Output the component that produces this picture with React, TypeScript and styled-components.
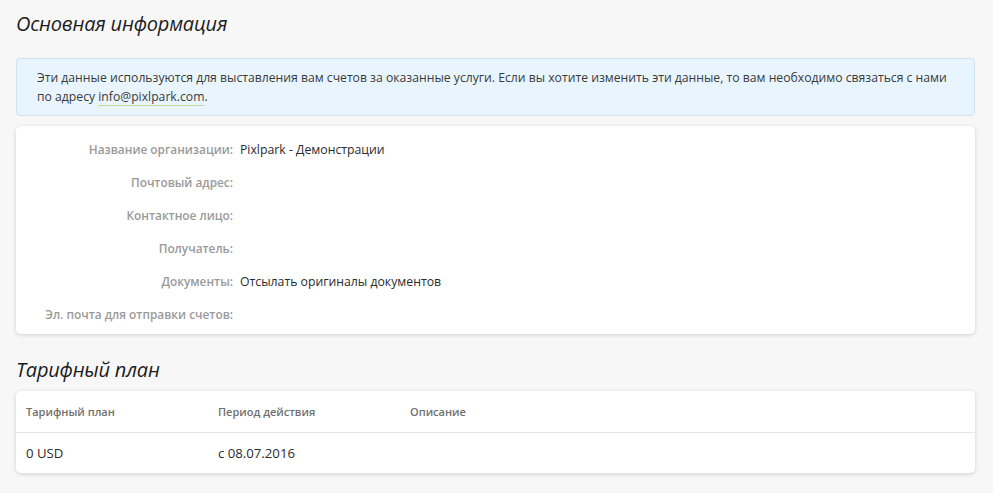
import { FC, Fragment } from 'react'
import styled, { createGlobalStyle } from 'styled-components'

const GlobalStyle = createGlobalStyle`
  html, body {
    margin: 0;
    padding: 0;
    background: #f7f7f7;
    font-family: 'Open Sans', 'Noto Sans', 'DejaVu Sans', sans-serif;
    color: #333;
  }
`

const Page = styled.div`
  padding: 8px 18px 20px 16px;
`

const Title = styled.h2<{ top?: number }>`
  margin: 0;
  padding-top: ${({ top }) => top ?? 0}px;
  font-size: 20px;
  font-weight: 400;
  font-style: italic;
  line-height: 32px;
  color: #1c1c1c;
  letter-spacing: -0.2px;
`

const Notice = styled.div`
  margin-top: 18px;
  padding: 9px 20px 9px 20px;
  background: #e9f5fe;
  border: 1px solid #cfe2f0;
  border-radius: 4px;
  font-size: 12.2px;
  line-height: 19px;
  color: #3a3a3a;
`

const Link = styled.a`
  color: #3a3a3a;
  text-decoration: none;
  border-bottom: 1px solid #bfdc94;
`

const Card = styled.div<{ top?: number }>`
  margin-top: ${({ top }) => top ?? 10}px;
  background: #fff;
  border-radius: 5px;
  box-shadow: 0 1px 4px rgba(0, 0, 0, 0.16);
`

const Fields = styled.div`
  display: grid;
  grid-template-columns: 217px 1fr;
  column-gap: 7px;
  padding: 7px 0 3px;
`

const Label = styled.div`
  text-align: right;
  font-size: 11.85px;
  font-weight: 600;
  color: #9a9a9a;
  line-height: 33px;
`

const Value = styled.div`
  font-size: 12.25px;
  color: #2b2b2b;
  line-height: 33px;
`

const Table = styled.table`
  width: 100%;
  border-collapse: collapse;
`

const Th = styled.th`
  width: 172px;
  padding: 0 10px;
  height: 41px;
  text-align: left;
  font-size: 11px;
  font-weight: 600;
  color: #6f6f6f;
  border-bottom: 1px solid #e6e6e6;
  &:last-child {
    width: auto;
  }
`

const Td = styled.td`
  padding: 0 10px;
  height: 40px;
  font-size: 13.2px;
  color: #2b2b2b;
`

const fields: [string, string][] = [
  ['Название организации:', 'Pixlpark - Демонстрации'],
  ['Почтовый адрес:', ''],
  ['Контактное лицо:', ''],
  ['Получатель:', ''],
  ['Документы:', 'Отсылать оригиналы документов'],
  ['Эл. почта для отправки счетов:', ''],
]

const App: FC = () => (
  <>
    <GlobalStyle />
    <Page>
      <Title>Основная информация</Title>
      <Notice>
        Эти данные используются для выставления вам счетов за оказанные услуги. Если вы хотите
        изменить эти данные, то вам необходимо связаться с нами по адресу{' '}
        <Link href="#">info@pixlpark.com</Link>.
      </Notice>
      <Card>
        <Fields>
          {fields.map(([label, value]) => (
            <Fragment key={label}>
              <Label>{label}</Label>
              <Value>{value}</Value>
            </Fragment>
          ))}
        </Fields>
      </Card>
      <Title top={20}>Тарифный план</Title>
      <Card top={5}>
        <Table>
          <thead>
            <tr>
              <Th>Тарифный план</Th>
              <Th>Период действия</Th>
              <Th>Описание</Th>
            </tr>
          </thead>
          <tbody>
            <tr>
              <Td>0 USD</Td>
              <Td>с 08.07.2016</Td>
              <Td></Td>
            </tr>
          </tbody>
        </Table>
      </Card>
    </Page>
  </>
)

export default App
